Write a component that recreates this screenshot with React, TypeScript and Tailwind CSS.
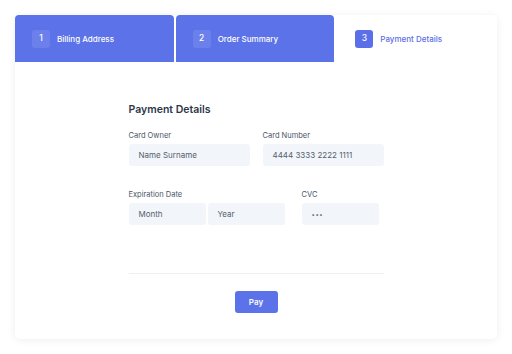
import React from 'react';

const steps = [
  { n: 1, label: 'Billing Address' },
  { n: 2, label: 'Order Summary' },
  { n: 3, label: 'Payment Details' },
];

const Field: React.FC<{ label: string; children: React.ReactNode; className?: string }> = ({ label, children, className }) => (
  <div className={className}>
    <div className="text-[7.5px] text-[#4a5568] mb-[3px] leading-[10px]">{label}</div>
    {children}
  </div>
);

const Input: React.FC<{ text: string; className?: string }> = ({ text, className }) => (
  <div className={`h-[22px] bg-[#f2f5f9] rounded-[3px] flex items-center pl-[10px] text-[8px] text-[#555f6e] ${className ?? ''}`}>
    {text}
  </div>
);

const App: React.FC = () => {
  const active = 3;
  return (
    <div className="w-[512px] h-[354px] bg-white pt-[15px] pl-[15px] font-['Inter',sans-serif]">
      <div className="w-[482px] h-[324px] bg-white rounded-[5px] shadow-[0_1px_8px_rgba(0,0,0,0.07)] flex flex-col">
        <div className="flex gap-[2px] h-[47px]">
          {steps.map((s) => {
            const on = s.n === active;
            return (
              <div
                key={s.n}
                className={`flex-1 flex items-center rounded-t-[4px] ${on ? 'bg-white pl-[19px]' : 'bg-[#5b72e8] pl-[17px]'}`}
              >
                <div
                  className={`w-[18px] h-[18px] rounded-[3px] flex items-center justify-center text-[8.5px] font-medium ${
                    on ? 'bg-[#5b6fe8] text-white' : 'bg-white/10 text-white'
                  }`}
                >
                  {s.n}
                </div>
                <span className={`ml-[7px] text-[8px] font-medium ${on ? 'text-[#5b6fe8]' : 'text-white'}`}>{s.label}</span>
              </div>
            );
          })}
        </div>

        <div className="w-[255px] mx-auto mt-[41px] flex flex-col">
          <div className="text-[10.5px] font-semibold text-[#2d3748] leading-[14px]">Payment Details</div>

          <div className="grid grid-cols-2 gap-[13px] mt-[14px]">
            <Field label="Card Owner">
              <Input text="Name Surname" />
            </Field>
            <Field label="Card Number">
              <Input text="4444 3333 2222 1111" />
            </Field>
          </div>

          <div className="flex mt-[24px]">
            <Field label="Expiration Date" className="w-[156px]">
              <div className="flex gap-[2px]">
                <Input text="Month" className="w-[77px]" />
                <Input text="Year" className="w-[77px]" />
              </div>
            </Field>
            <Field label="CVC" className="ml-[17px]">
              <Input text="•••" className="w-[77px] !text-[6px] tracking-[0.5px]" />
            </Field>
          </div>

          <div className="h-px bg-[#edf0f3] mt-[48px]" />

          <button className="self-center mt-[17px] w-[43px] h-[22px] bg-[#5b72e8] rounded-[3px] text-white text-[8px] font-semibold">
            Pay
          </button>
        </div>
      </div>
    </div>
  );
};

export default App;
